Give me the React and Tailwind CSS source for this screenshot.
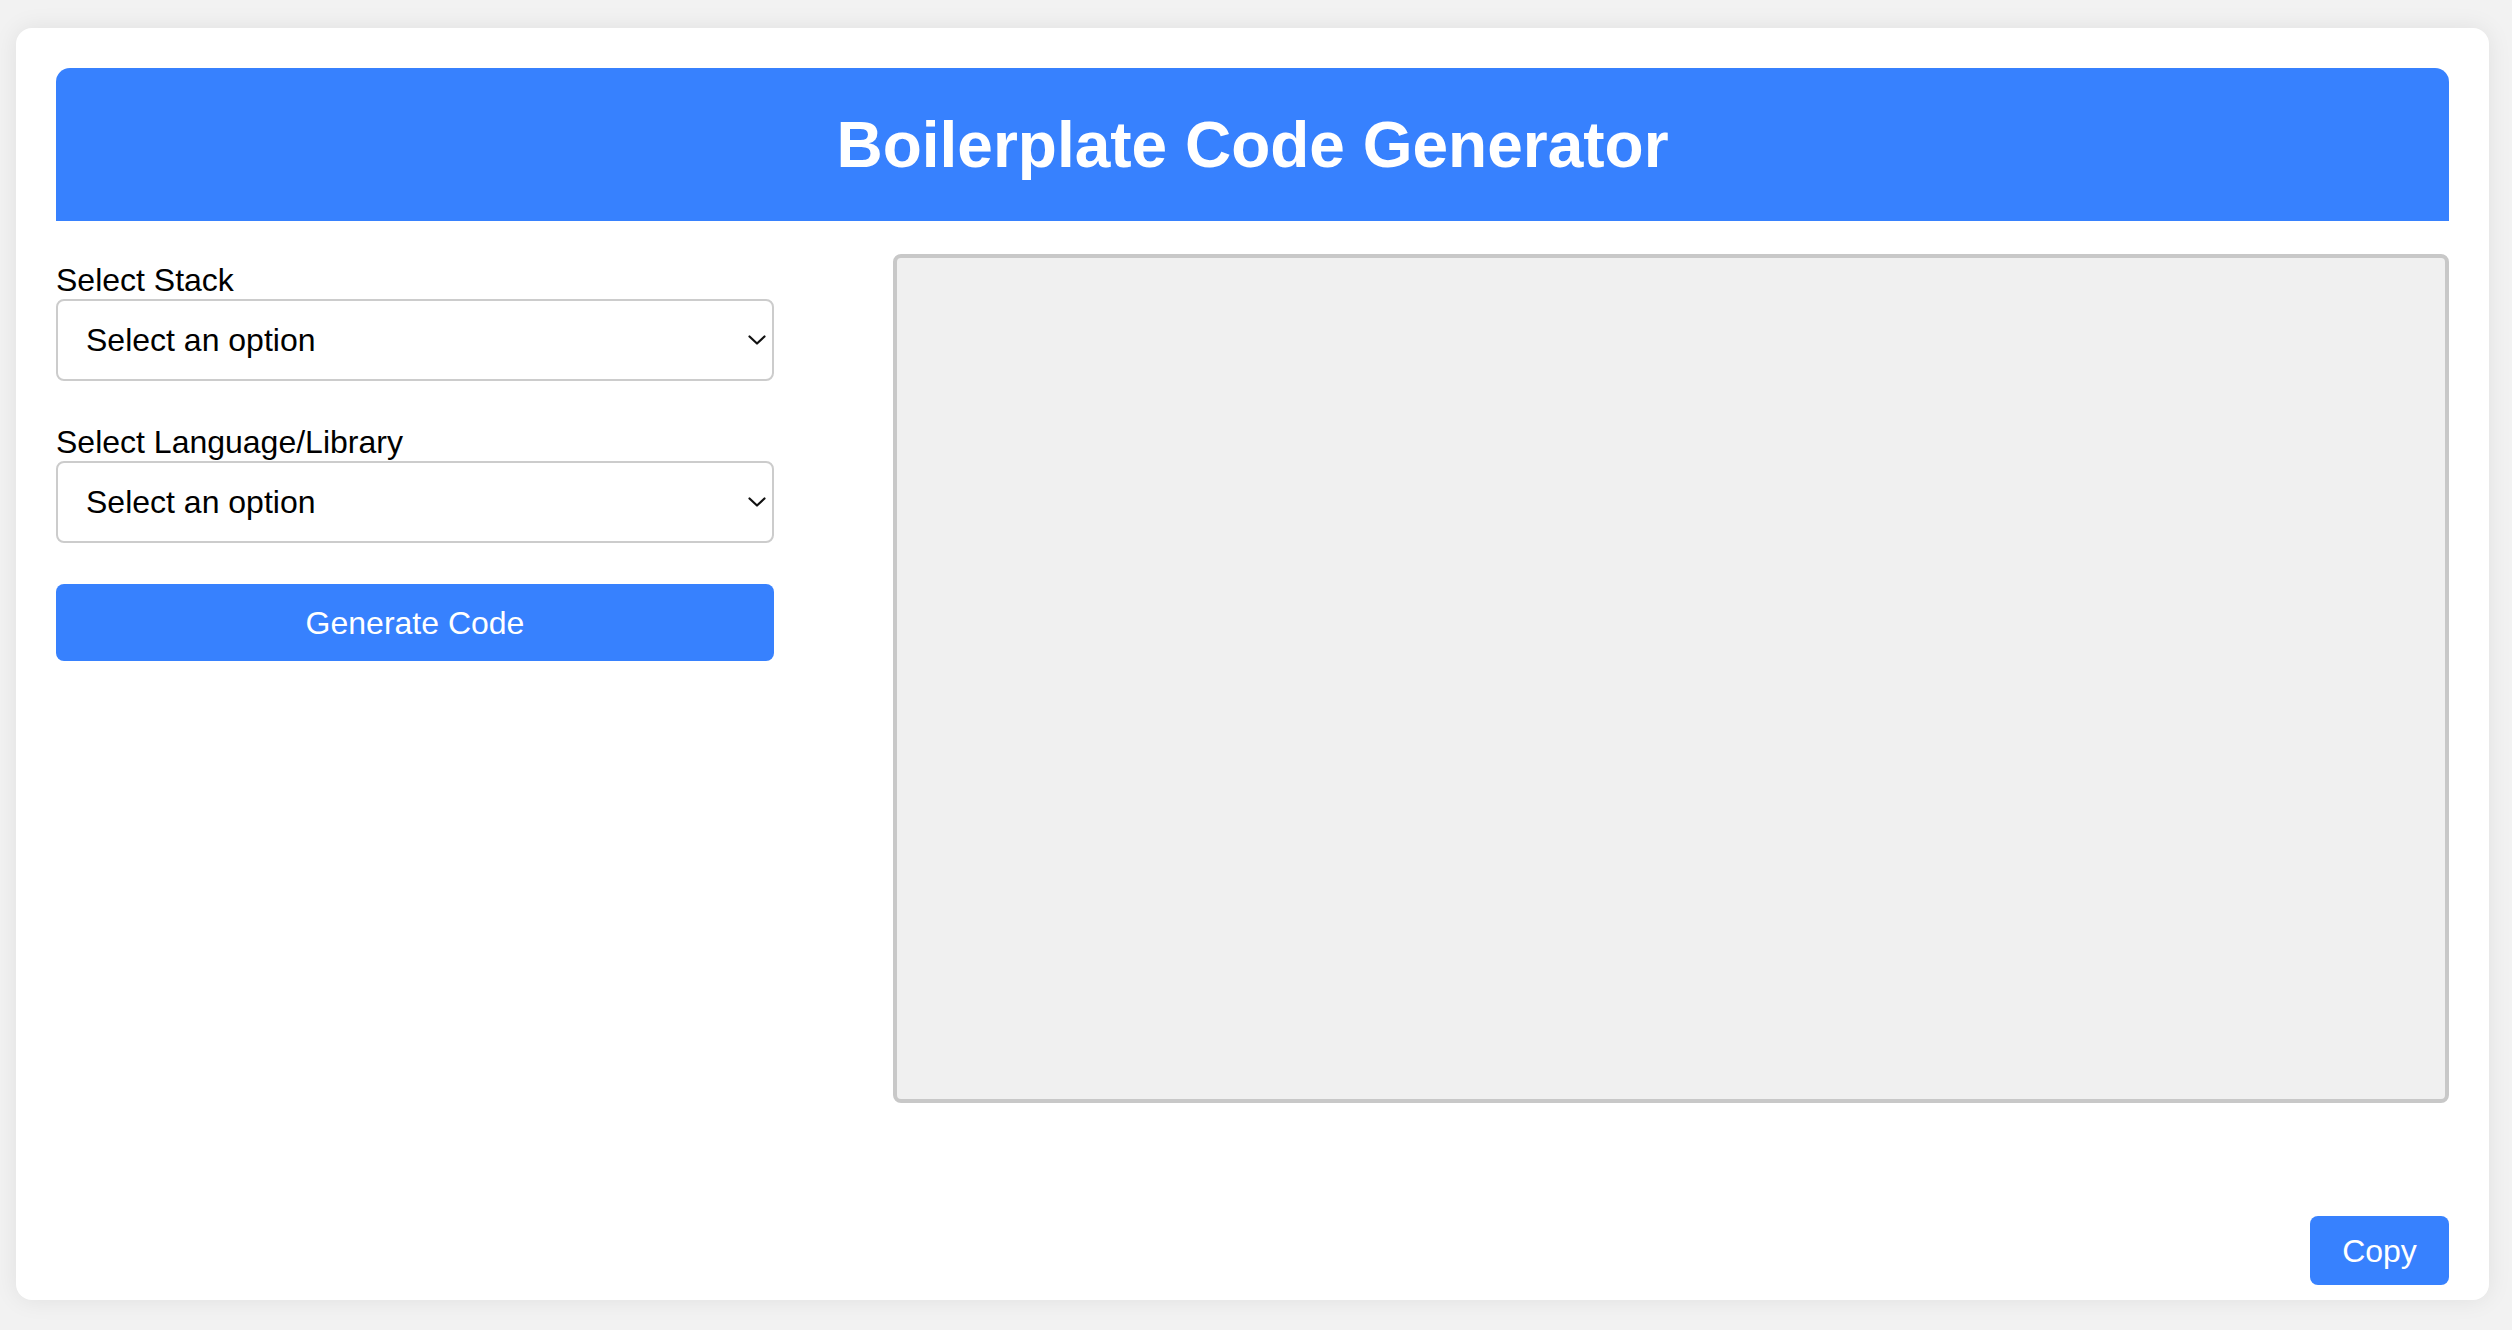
import React, { useState } from 'react';

const font = { fontFamily: '"Liberation Sans", Arial, sans-serif' };

const Chevron = () => (
  <svg width="18" height="10" viewBox="0 0 18 10" className="pointer-events-none absolute right-[8px] top-1/2 -translate-y-1/2">
    <path d="M1.5 1.5 L9 8.5 L16.5 1.5" fill="none" stroke="#111" strokeWidth="2.2" strokeLinecap="round" strokeLinejoin="round" />
  </svg>
);

const Field = ({ label, value, onChange, className }) => (
  <div className={className}>
    <label className="mb-[1px] block text-[32px] leading-[36px] text-black">{label}</label>
    <div className="relative">
      <select
        value={value}
        onChange={e => onChange(e.target.value)}
        className="block w-full h-[82px] appearance-none rounded-[8px] border-2 border-[#cccccc] bg-white pl-[28px] pr-[40px] text-[32px] text-black outline-none"
        style={font}
      >
        <option value="">Select an option</option>
        <option value="frontend">Frontend</option>
        <option value="backend">Backend</option>
        <option value="fullstack">Full Stack</option>
      </select>
      <Chevron />
    </div>
  </div>
);

const App = () => {
  const [stack, setStack] = useState('');
  const [lang, setLang] = useState('');
  const [code, setCode] = useState('');

  return (
    <div className="min-h-screen bg-[#f2f2f2] pt-[28px] pl-[16px]" style={font}>
      <div className="flex h-[1272px] w-[2473px] flex-col rounded-[16px] bg-white px-[40px] pt-[40px] pb-[15px] shadow-[0_0_24px_rgba(0,0,0,0.08)]">
        {/* header */}
        <div className="flex h-[153px] items-center justify-center rounded-t-[14px] bg-[#3781fe]">
          <h1 className="text-[64px] font-bold leading-none text-white">Boilerplate Code Generator</h1>
        </div>

        <div className="mt-[33px] flex gap-[119px]">
          <div className="w-[718px] pt-[8px]">
            <Field label="Select Stack" value={stack} onChange={setStack} />
            <Field label="Select Language/Library" value={lang} onChange={setLang} className="mt-[43px]" />
            <button
              onClick={() => setCode(`// ${stack || 'stack'} / ${lang || 'library'}`)}
              className="mt-[41px] flex h-[77px] w-full items-center justify-center rounded-[8px] bg-[#3781fe] text-[32px] text-white"
            >
              Generate Code
            </button>
          </div>

          <textarea
            value={code}
            onChange={e => setCode(e.target.value)}
            className="h-[849px] w-[1556px] resize-none rounded-[8px] border-4 border-[#c8c8c8] bg-[#f0f0f0] p-4 text-[24px] outline-none"
            style={{ fontFamily: '"Liberation Mono", monospace' }}
          />
        </div>

        <div className="mt-auto flex justify-end">
          <button
            onClick={() => navigator.clipboard?.writeText(code)}
            className="flex h-[69px] w-[139px] items-center justify-center rounded-[8px] bg-[#3781fe] text-[32px] text-white"
          >
            Copy
          </button>
        </div>
      </div>
    </div>
  );
};

export default App;
